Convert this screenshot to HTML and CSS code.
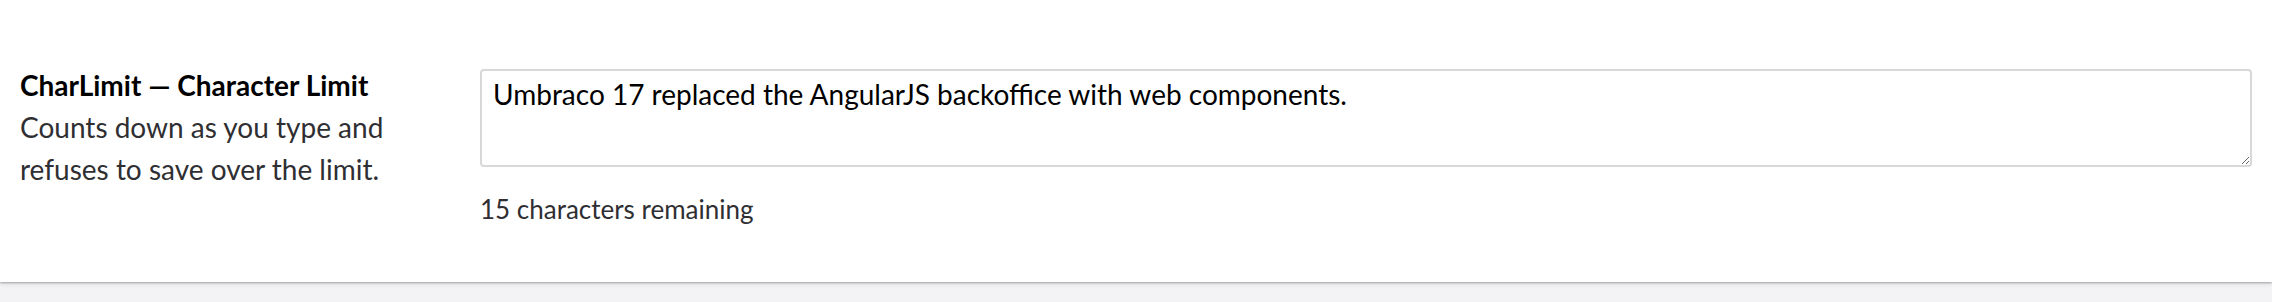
FILE: index.html
```html
<!DOCTYPE html>
<html lang="en">
<head>
<meta charset="utf-8">
<title>CharLimit</title>
<link rel="stylesheet" href="styles.css">
</head>
<body>
<div class="panel">
  <div class="row">
    <div class="label-col">
      <div class="label">CharLimit — Character Limit</div>
      <div class="desc">Counts down as you type and refuses to save over the limit.</div>
    </div>
    <div class="editor-col">
      <textarea class="input">Umbraco 17 replaced the AngularJS backoffice with web components.</textarea>
      <div class="helper">15 characters remaining</div>
    </div>
  </div>
</div>
</body>
</html>
```
FILE: styles.css
```css
html, body {
  margin: 0;
  padding: 0;
}
body {
  background: #f3f3f5;
  font-family: Lato, "Noto Sans", sans-serif;
  height: 302px;
  overflow: hidden;
}
.panel {
  background: #ffffff;
  height: 282px;
  box-sizing: border-box;
  padding: 64px 20px 0 20px;
  box-shadow: 0 1px 2px rgba(0,0,0,0.3), 0 2px 6px rgba(0,0,0,0.08);
}
.row {
  display: grid;
  grid-template-columns: 440px 1fr;
  column-gap: 20px;
}
.label {
  font-weight: 700;
  font-size: 28px;
  line-height: 42px;
  color: #000000;
}
.desc {
  font-size: 28px;
  line-height: 42px;
  color: #2f2f33;
}
.editor-col {
  display: flex;
  flex-direction: column;
}
.input {
  margin: 5px 0 0 0;
  height: 98px;
  box-sizing: border-box;
  width: 100%;
  border: 2px solid #d8d8d8;
  border-radius: 4px;
  padding: 7px 11px;
  font-family: Lato, "Noto Sans", sans-serif;
  font-size: 28px;
  line-height: 32px;
  color: #000000;
  resize: vertical;
}
.helper {
  margin-top: 26px;
  font-size: 26px;
  line-height: 32px;
  color: #2f2f33;
}
```
